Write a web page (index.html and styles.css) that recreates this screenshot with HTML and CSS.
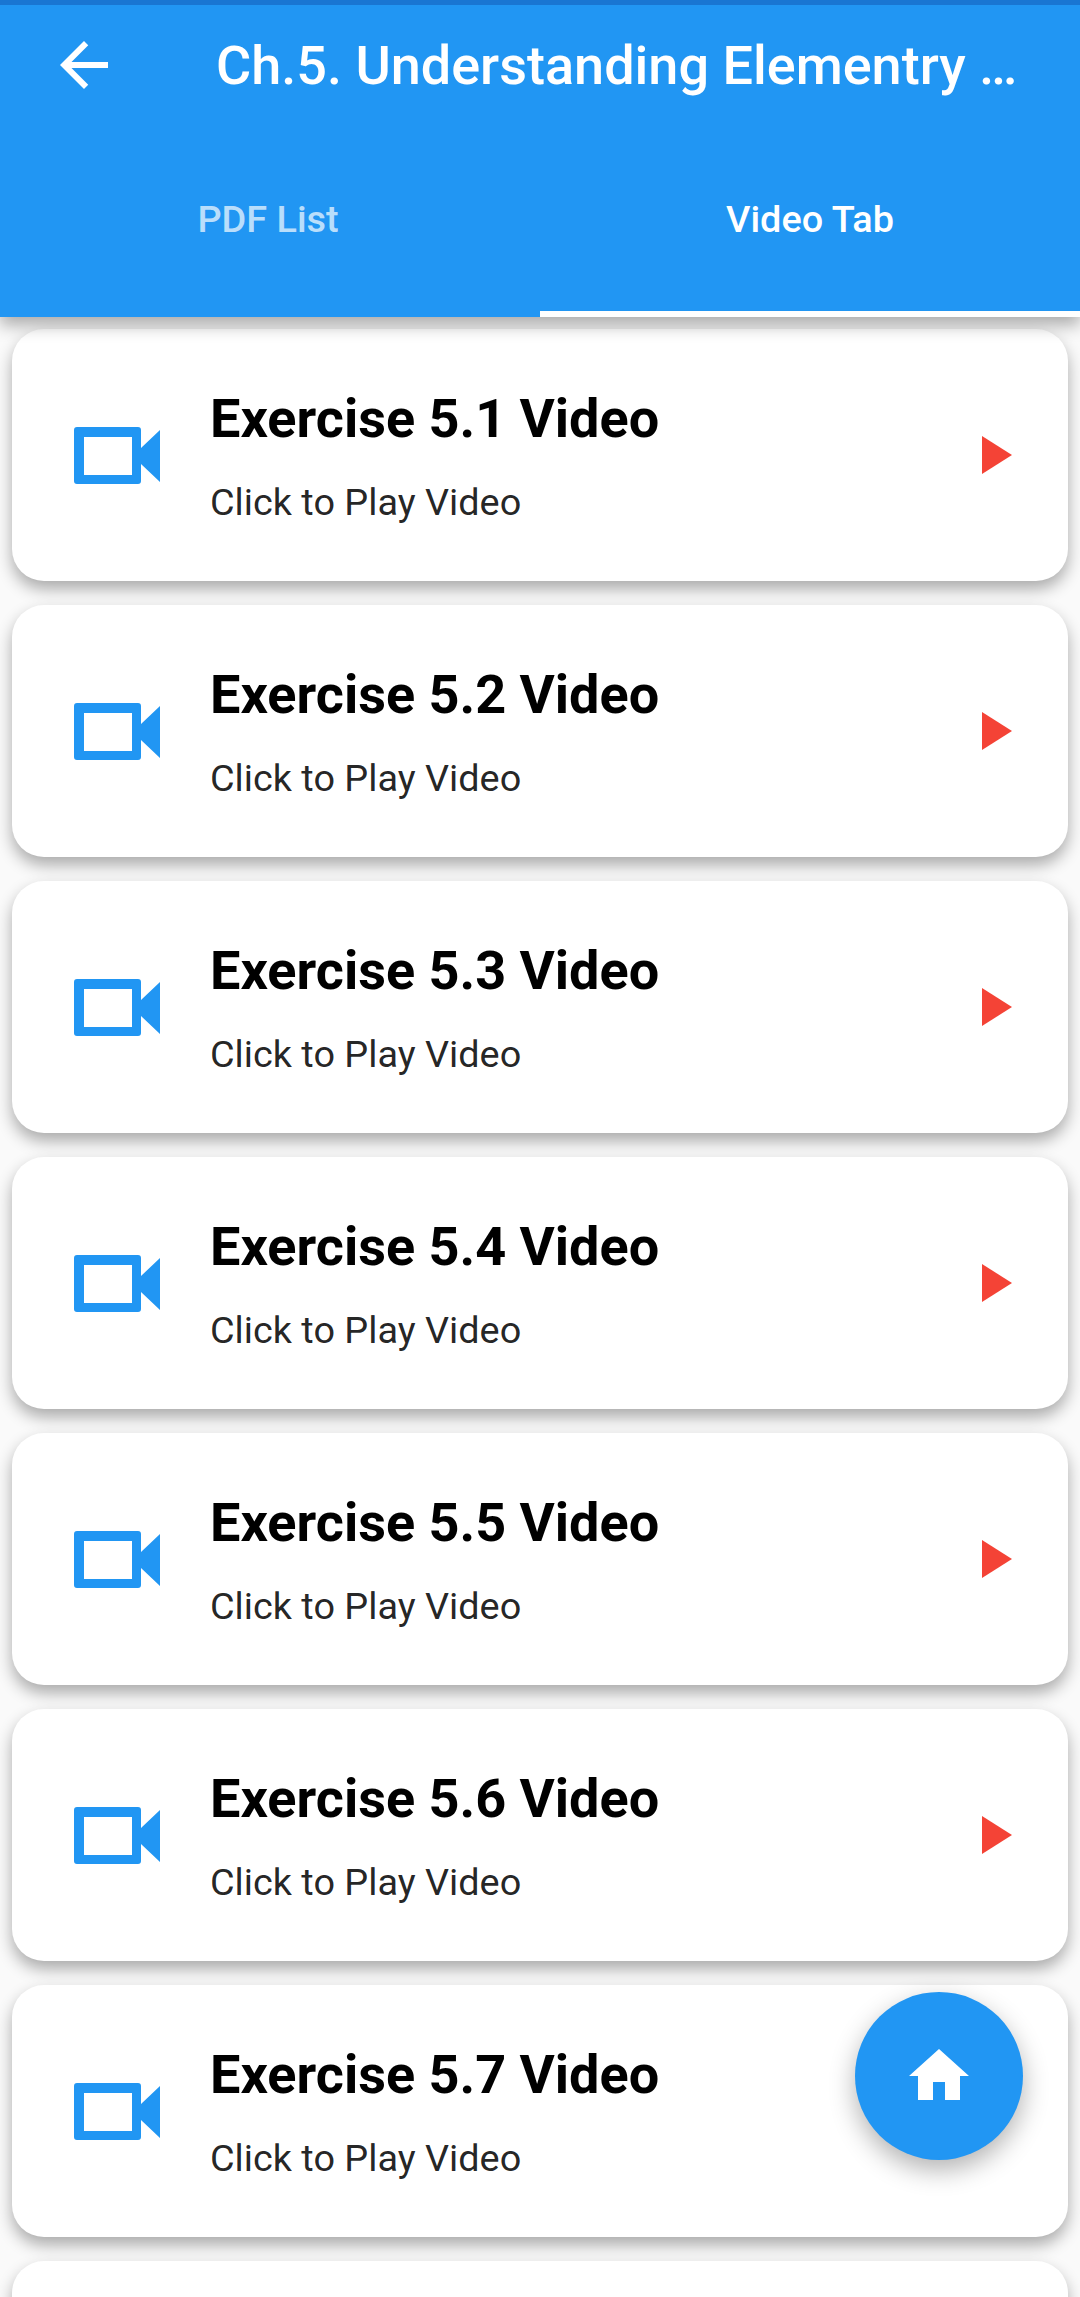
FILE: index.html
```html
<!DOCTYPE html>
<html lang="en">
<head>
    <meta charset="UTF-8">
    <meta name="viewport" content="width=device-width, initial-scale=1.0">
    <title>Video Tab</title>
    <link rel="stylesheet" href="styles.css">
</head>
<body>
    <div class="screen">
        <!-- Header -->
        <header class="header">
            <div class="status-bar"></div>
            <div class="app-bar">
                <svg class="back-icon" viewBox="0 0 24 24"><path d="M20 11H7.83l5.59-5.59L12 4l-8 8 8 8 1.41-1.41L7.83 13H20v-2z"/></svg>
                <h1 class="page-title">Ch.5. Understanding Elementry …</h1>
            </div>
            <div class="tabs">
                <div class="tab">PDF List</div>
                <div class="tab active">Video Tab</div>
            </div>
        </header>

        <!-- Video list -->
        <main class="video-list">
            <div class="card">
                <svg class="video-icon" viewBox="0 0 86 57"><path fill-rule="evenodd" d="M3 0h61a3 3 0 0 1 3 3v18L86 3v52L67 37v17a3 3 0 0 1-3 3H3a3 3 0 0 1-3-3V3a3 3 0 0 1 3-3zM10 10v38h48V10z"/></svg>
                <div class="card-text">
                    <div class="card-title">Exercise 5.1 Video</div>
                    <div class="card-sub">Click to Play Video</div>
                </div>
                <svg class="play-icon" viewBox="0 0 30 38"><path d="M0 0l30 19L0 38z"/></svg>
            </div>
            <div class="card">
                <svg class="video-icon" viewBox="0 0 86 57"><path fill-rule="evenodd" d="M3 0h61a3 3 0 0 1 3 3v18L86 3v52L67 37v17a3 3 0 0 1-3 3H3a3 3 0 0 1-3-3V3a3 3 0 0 1 3-3zM10 10v38h48V10z"/></svg>
                <div class="card-text">
                    <div class="card-title">Exercise 5.2 Video</div>
                    <div class="card-sub">Click to Play Video</div>
                </div>
                <svg class="play-icon" viewBox="0 0 30 38"><path d="M0 0l30 19L0 38z"/></svg>
            </div>
            <div class="card">
                <svg class="video-icon" viewBox="0 0 86 57"><path fill-rule="evenodd" d="M3 0h61a3 3 0 0 1 3 3v18L86 3v52L67 37v17a3 3 0 0 1-3 3H3a3 3 0 0 1-3-3V3a3 3 0 0 1 3-3zM10 10v38h48V10z"/></svg>
                <div class="card-text">
                    <div class="card-title">Exercise 5.3 Video</div>
                    <div class="card-sub">Click to Play Video</div>
                </div>
                <svg class="play-icon" viewBox="0 0 30 38"><path d="M0 0l30 19L0 38z"/></svg>
            </div>
            <div class="card">
                <svg class="video-icon" viewBox="0 0 86 57"><path fill-rule="evenodd" d="M3 0h61a3 3 0 0 1 3 3v18L86 3v52L67 37v17a3 3 0 0 1-3 3H3a3 3 0 0 1-3-3V3a3 3 0 0 1 3-3zM10 10v38h48V10z"/></svg>
                <div class="card-text">
                    <div class="card-title">Exercise 5.4 Video</div>
                    <div class="card-sub">Click to Play Video</div>
                </div>
                <svg class="play-icon" viewBox="0 0 30 38"><path d="M0 0l30 19L0 38z"/></svg>
            </div>
            <div class="card">
                <svg class="video-icon" viewBox="0 0 86 57"><path fill-rule="evenodd" d="M3 0h61a3 3 0 0 1 3 3v18L86 3v52L67 37v17a3 3 0 0 1-3 3H3a3 3 0 0 1-3-3V3a3 3 0 0 1 3-3zM10 10v38h48V10z"/></svg>
                <div class="card-text">
                    <div class="card-title">Exercise 5.5 Video</div>
                    <div class="card-sub">Click to Play Video</div>
                </div>
                <svg class="play-icon" viewBox="0 0 30 38"><path d="M0 0l30 19L0 38z"/></svg>
            </div>
            <div class="card">
                <svg class="video-icon" viewBox="0 0 86 57"><path fill-rule="evenodd" d="M3 0h61a3 3 0 0 1 3 3v18L86 3v52L67 37v17a3 3 0 0 1-3 3H3a3 3 0 0 1-3-3V3a3 3 0 0 1 3-3zM10 10v38h48V10z"/></svg>
                <div class="card-text">
                    <div class="card-title">Exercise 5.6 Video</div>
                    <div class="card-sub">Click to Play Video</div>
                </div>
                <svg class="play-icon" viewBox="0 0 30 38"><path d="M0 0l30 19L0 38z"/></svg>
            </div>
            <div class="card">
                <svg class="video-icon" viewBox="0 0 86 57"><path fill-rule="evenodd" d="M3 0h61a3 3 0 0 1 3 3v18L86 3v52L67 37v17a3 3 0 0 1-3 3H3a3 3 0 0 1-3-3V3a3 3 0 0 1 3-3zM10 10v38h48V10z"/></svg>
                <div class="card-text">
                    <div class="card-title">Exercise 5.7 Video</div>
                    <div class="card-sub">Click to Play Video</div>
                </div>
                <svg class="play-icon" viewBox="0 0 30 38"><path d="M0 0l30 19L0 38z"/></svg>
            </div>
            <div class="card"></div>
        </main>

        <!-- Home button -->
        <div class="fab">
            <svg class="home-icon" viewBox="0 0 24 24"><path d="M10 20v-6h4v6h5v-8h3L12 3 2 12h3v8z"/></svg>
        </div>
    </div>
</body>
</html>
```

FILE: styles.css
```css
html, body {
    margin: 0;
    padding: 0;
}

body {
    font-family: Roboto, "Liberation Sans", sans-serif;
    background-color: #fafafa;
}

.screen {
    position: relative;
    width: 1080px;
    height: 2297px;
    overflow: hidden;
    background: #fafafa;
}

/* Header */
.header {
    position: relative;
    z-index: 2;
    height: 317px;
    background: #2196f3;
    box-shadow: 0 8px 16px rgba(0, 0, 0, 0.32);
}

.status-bar {
    height: 5px;
    background: #1976d2;
}

.app-bar {
    display: flex;
    align-items: center;
    height: 120px;
    padding-left: 48px;
}

.back-icon {
    width: 72px;
    height: 72px;
    fill: #fff;
    flex-shrink: 0;
}

.page-title {
    margin: 0 0 0 96px;
    font-size: 54px;
    font-weight: 500;
    color: #fff;
    white-space: nowrap;
}

.tabs {
    display: flex;
    height: 192px;
}

.tab {
    box-sizing: border-box;
    width: 50%;
    display: flex;
    align-items: center;
    justify-content: center;
    padding: 0 4px 4px 0;
    font-size: 37.85px;
    font-weight: 500;
    color: rgba(255, 255, 255, 0.7);
}

.tab.active {
    padding-right: 0;
    color: #fff;
    box-shadow: inset 0 -6px 0 #fff;
}

/* Cards */
.video-list {
    display: flex;
    flex-direction: column;
    gap: 24px;
    padding: 12px 12px 0;
}

.card {
    display: flex;
    align-items: center;
    flex-shrink: 0;
    height: 252px;
    padding: 0 56px 0 62px;
    border-radius: 32px;
    background: #fff;
    box-shadow: 0 8px 16px rgba(0, 0, 0, 0.32);
}

.video-icon {
    width: 86px;
    height: 57px;
    fill: #2196f3;
    flex-shrink: 0;
}

.card-text {
    flex: 1;
    margin-left: 50px;
}

.card-title {
    font-size: 54px;
    font-weight: 700;
    color: #000;
}

.card-sub {
    margin-top: 30px;
    font-size: 37.85px;
    color: rgba(0, 0, 0, 0.87);
}

.play-icon {
    width: 30px;
    height: 38px;
    fill: #f44336;
    flex-shrink: 0;
}

/* Home button */
.fab {
    position: absolute;
    left: 855px;
    top: 1992px;
    z-index: 3;
    display: flex;
    align-items: center;
    justify-content: center;
    width: 168px;
    height: 168px;
    border-radius: 50%;
    background: #2196f3;
    box-shadow: 0 10px 26px rgba(0, 0, 0, 0.3);
}

.home-icon {
    width: 72px;
    height: 72px;
    fill: #fff;
}
```
